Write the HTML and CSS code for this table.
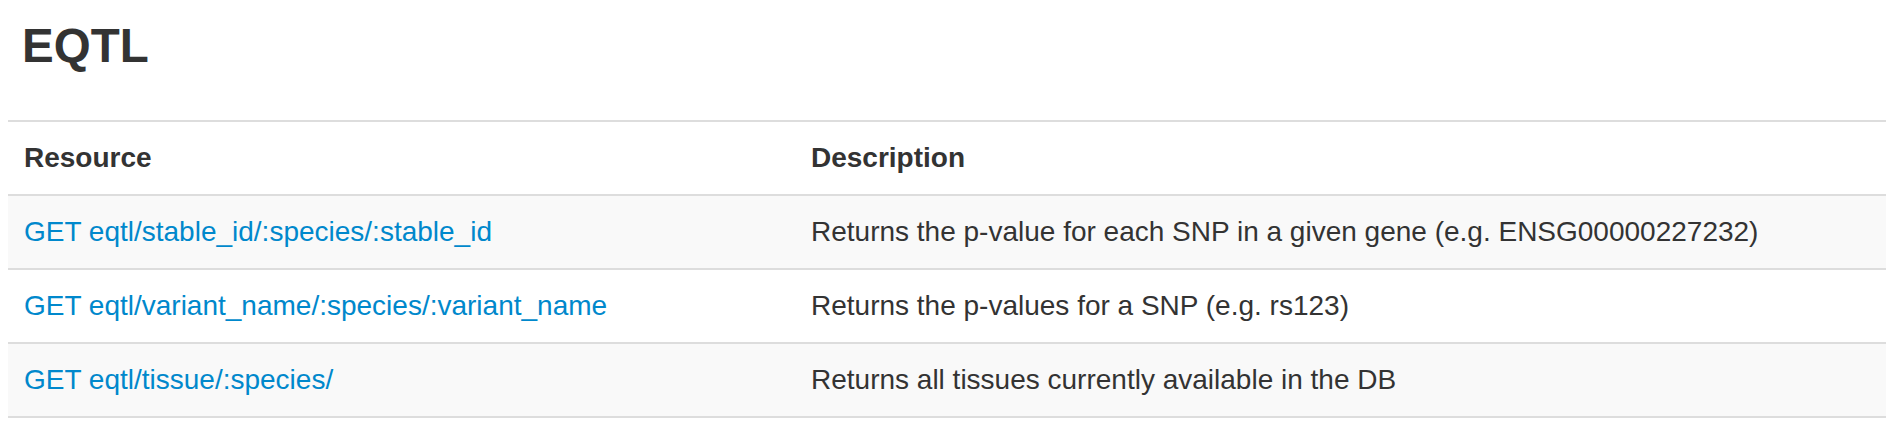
FILE: index.html
```html
<!DOCTYPE html>
<html>
<head>
<meta charset="utf-8">
<link rel="stylesheet" href="styles.css">
<title>EQTL</title>
</head>
<body>
<div class="page">
  <h3 class="title">EQTL</h3>
  <table class="endpoints">
    <thead>
      <tr>
        <th class="col-resource">Resource</th>
        <th>Description</th>
      </tr>
    </thead>
    <tbody>
      <tr class="striped">
        <td><a href="#">GET eqtl/stable_id/:species/:stable_id</a></td>
        <td>Returns the p-value for each SNP in a given gene (e.g. ENSG00000227232)</td>
      </tr>
      <tr>
        <td><a href="#">GET eqtl/variant_name/:species/:variant_name</a></td>
        <td>Returns the p-values for a SNP (e.g. rs123)</td>
      </tr>
      <tr class="striped">
        <td><a href="#">GET eqtl/tissue/:species/</a></td>
        <td>Returns all tissues currently available in the DB</td>
      </tr>
    </tbody>
  </table>
</div>
</body>
</html>
```

FILE: styles.css
```css
html, body {
  margin: 0;
  padding: 0;
  background: #ffffff;
}

body {
  font-family: "Liberation Sans", Arial, Helvetica, sans-serif;
  font-size: 28px;
  line-height: 40px;
  color: #333333;
}

.page {
  padding-left: 8px;
}

.title {
  margin: 6px 0 34px 0;
  padding-left: 14px;
  font-size: 47.5px;
  line-height: 80px;
  font-weight: bold;
  color: #333333;
}

.endpoints {
  width: 100%;
  border-collapse: collapse;
  border-spacing: 0;
  border-bottom: 2px solid #dddddd;
}

.endpoints th,
.endpoints td {
  padding: 16px;
  text-align: left;
  vertical-align: top;
  border-top: 2px solid #dddddd;
  line-height: 40px;
  white-space: nowrap;
}

.endpoints th {
  font-weight: bold;
}

.col-resource {
  width: 755px;
}

.endpoints tr.striped td {
  background: #f9f9f9;
}

.endpoints a {
  color: #0088cc;
  text-decoration: none;
}
```
